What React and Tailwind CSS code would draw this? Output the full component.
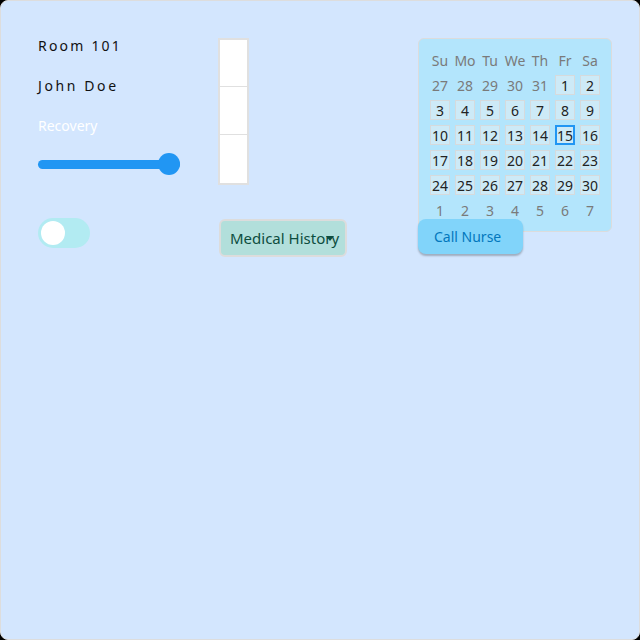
import React, { useState } from 'react'

const FONT = { fontFamily: '"Noto Sans", "Open Sans", sans-serif' }

const weeks = [
  [[27, 0], [28, 0], [29, 0], [30, 0], [31, 0], [1, 1], [2, 1]],
  [[3, 1], [4, 1], [5, 1], [6, 1], [7, 1], [8, 1], [9, 1]],
  [[10, 1], [11, 1], [12, 1], [13, 1], [14, 1], [15, 1], [16, 1]],
  [[17, 1], [18, 1], [19, 1], [20, 1], [21, 1], [22, 1], [23, 1]],
  [[24, 1], [25, 1], [26, 1], [27, 1], [28, 1], [29, 1], [30, 1]],
  [[1, 0], [2, 0], [3, 0], [4, 0], [5, 0], [6, 0], [7, 0]],
]

function Calendar() {
  const days = ['Su', 'Mo', 'Tu', 'We', 'Th', 'Fr', 'Sa']
  return (
    <div className="w-[194px] h-[194px] rounded-md border border-[#dcdcdc] bg-[#b3e5fc] pt-[11px] pl-[11px]">
      <div className="grid grid-cols-[repeat(7,20px)] auto-rows-[20px] gap-[5px] text-[14px]">
        {days.map((d) => (
          <div key={d} className="flex items-center justify-center text-[#7a7a7a]">{d}</div>
        ))}
        {weeks.flat().map(([n, cur], i) => {
          const today = cur && n === 15
          return (
            <div
              key={i}
              className={
                cur
                  ? today
                    ? 'flex items-center justify-center border-2 border-[#2196f3] bg-[#cdeaf7] text-[#222]'
                    : 'flex items-center justify-center border border-[#d6dadc] bg-[#cdeaf7] text-[#222]'
                  : 'flex items-center justify-center text-[#7a7a7a]'
              }
            >
              {n}
            </div>
          )
        })}
      </div>
    </div>
  )
}

export default function App() {
  const [on, setOn] = useState(false)
  return (
    <div className="w-[640px] h-[640px] bg-black" style={FONT}>
      <div className="w-full h-full rounded-lg border border-[#dddddd] bg-[#d3e6fe] pl-[37px] pr-[27px] py-[37px] flex">
        {/* column 1 */}
        <div className="w-[142px] shrink-0 flex flex-col">
          <div className="h-[180px]">
            <p className="leading-4 text-[14px] tracking-[2.2px] text-[#111]">Room 101</p>
            <p className="mt-6 leading-4 text-[14px] tracking-[2.6px] text-[#111]">John Doe</p>
            <p className="mt-6 leading-4 text-[14px] text-white">Recovery</p>
            <div className="mt-[19px] h-[22px] relative flex items-center">
              <div className="h-[9px] w-full rounded-full bg-[#2196f3]" />
              <div className="absolute right-0 top-0 w-[22px] h-[22px] rounded-full bg-[#2196f3]" />
            </div>
          </div>
          <button
            onClick={() => setOn(!on)}
            className="w-[52px] h-[30px] rounded-full bg-[#b2ebf2] p-[3px] flex items-center"
          >
            <span className="w-[24px] h-[24px] rounded-full bg-white" />
          </button>
        </div>

        {/* column 2 */}
        <div className="ml-[38px] w-[162px] shrink-0 flex flex-col">
          <div className="h-[181px]">
            <div className="w-[31px] border-2 border-[#e0e0e0] bg-white divide-y divide-[#e0e0e0]">
              <div className="h-[47px]" />
              <div className="h-[48px]" />
              <div className="h-[48px]" />
            </div>
          </div>
          <div className="relative w-[128px] h-[38px] ml-px rounded-md border-2 border-[#dcdcdc] bg-[#b2dfdb] flex items-center pl-[9px] text-[15px] text-[#0d4d40] whitespace-nowrap">
            Medical History
            <span className="absolute left-[105px] top-[15px] w-0 h-0 border-l-[4px] border-r-[4px] border-t-[5px] border-l-transparent border-r-transparent border-t-[#0d4d40]" />
          </div>
        </div>

        {/* column 3 */}
        <div className="ml-[38px] w-[194px] shrink-0 flex flex-col">
          <div className="h-[181px]">
            <Calendar />
          </div>
          <button className="relative z-10 w-[105px] h-[35px] rounded-lg bg-[#81d4fa] text-[14px] text-[#0277bd] text-left pl-[16px] shadow-[0_2px_2px_rgba(0,0,0,0.25)]">
            Call Nurse
          </button>
        </div>
      </div>
    </div>
  )
}
